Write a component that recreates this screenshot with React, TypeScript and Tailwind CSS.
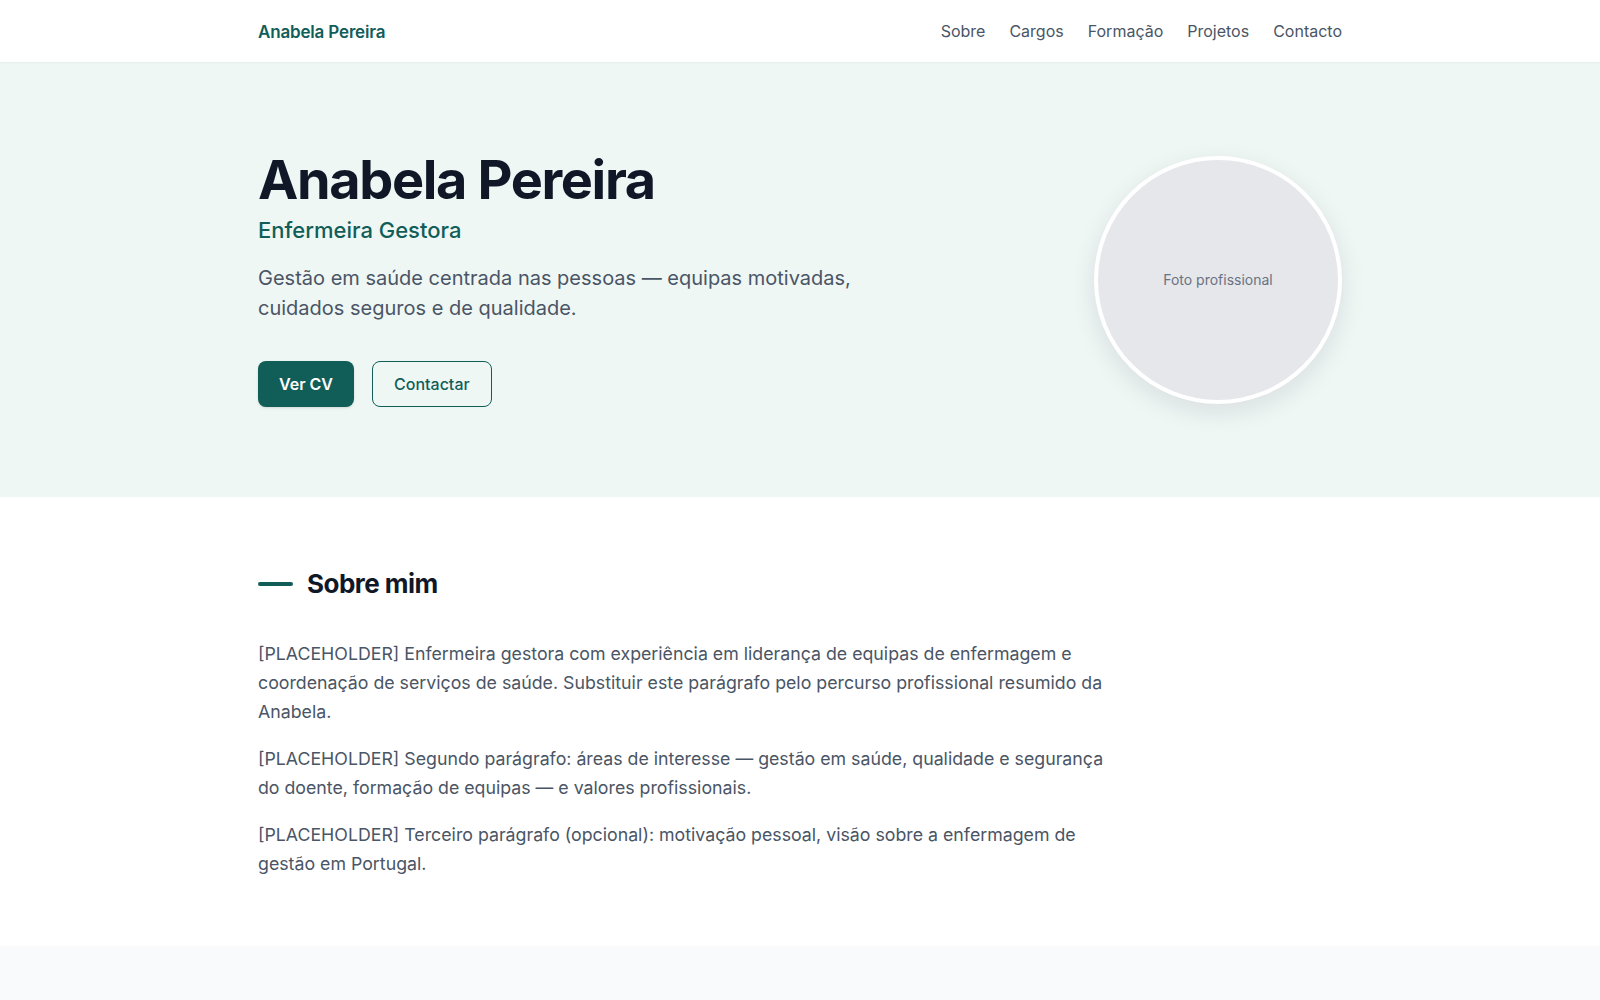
import { memo } from 'react';

const navLinks = ['Sobre', 'Cargos', 'Formação', 'Projetos', 'Contacto'];

const aboutParagraphs = [
  '[PLACEHOLDER] Enfermeira gestora com experiência em liderança de equipas de enfermagem e coordenação de serviços de saúde. Substituir este parágrafo pelo percurso profissional resumido da Anabela.',
  '[PLACEHOLDER] Segundo parágrafo: áreas de interesse — gestão em saúde, qualidade e segurança do doente, formação de equipas — e valores profissionais.',
  '[PLACEHOLDER] Terceiro parágrafo (opcional): motivação pessoal, visão sobre a enfermagem de gestão em Portugal.',
];

const Header = () => (
  <header className="bg-white h-[62px] relative z-10 shadow-[0_1px_2px_rgba(15,23,42,0.04)]">
    <div className="mx-auto max-w-[1148px] px-8 h-full flex items-center justify-between">
      <a href="#" className="mt-1 text-[17px] font-semibold text-[#115e59] tracking-[-0.01em]">
        Anabela Pereira
      </a>
      <nav className="flex items-center gap-6">
        {navLinks.map((link) => (
          <a key={link} href="#" className="text-base text-gray-600 hover:text-[#115e59]">
            {link}
          </a>
        ))}
      </nav>
    </div>
  </header>
);

const Hero = () => (
  <section className="bg-[#eff7f5] pt-[87px] pb-[90px]">
    <div className="mx-auto max-w-[1148px] px-8 flex items-center justify-between">
      <div>
        <h1 className="text-[54px] leading-[62px] font-bold tracking-[-0.025em] text-gray-900">
          Anabela Pereira
        </h1>
        <p className="mt-[3px] text-[22px] leading-8 font-medium text-[#115e59]">Enfermeira Gestora</p>
        <p className="mt-[17px] max-w-2xl text-xl leading-[30px] text-gray-600">
          Gestão em saúde centrada nas pessoas — equipas motivadas, cuidados seguros e de qualidade.
        </p>
        <div className="mt-[38px] flex items-center gap-[18px]">
          <a
            href="#"
            className="h-[46px] px-[21px] flex items-center rounded-lg bg-[#115e59] text-white font-semibold shadow-sm"
          >
            Ver CV
          </a>
          <a
            href="#"
            className="h-[46px] px-[21px] flex items-center rounded-lg border border-[#115e59] text-[#115e59] font-medium"
          >
            Contactar
          </a>
        </div>
      </div>

      {/* photo placeholder */}
      <div className="mt-[4px] w-62 h-62 shrink-0 rounded-full border-4 border-white bg-gray-200 shadow-[0_8px_24px_rgba(15,23,42,0.10)] flex items-center justify-center">
        <span className="text-sm text-gray-500">Foto profissional</span>
      </div>
    </div>
  </section>
);

const About = () => (
  <section className="bg-white pt-[70px] pb-[68px]">
    <div className="mx-auto max-w-[1148px] px-8">
      <div className="flex items-center gap-[14px] mb-[38px]">
        <span className="block w-[35px] h-1 rounded-full bg-[#115e59]" />
        <h2 className="text-[26px] leading-[34px] font-bold tracking-[-0.02em] text-gray-900">Sobre mim</h2>
      </div>
      <div className="max-w-[860px] flex flex-col gap-[18px]">
        {aboutParagraphs.map((text) => (
          <p key={text.slice(0, 40)} className="text-[17.75px] leading-[29px] text-gray-600">
            {text}
          </p>
        ))}
      </div>
    </div>
  </section>
);

const App = memo(() => (
  <div className="min-h-screen bg-gray-50 font-['Inter',sans-serif] antialiased">
    <Header />
    <Hero />
    <About />
    <section className="bg-gray-50 h-[120px]" />
  </div>
));

App.displayName = 'App';

export default App;
